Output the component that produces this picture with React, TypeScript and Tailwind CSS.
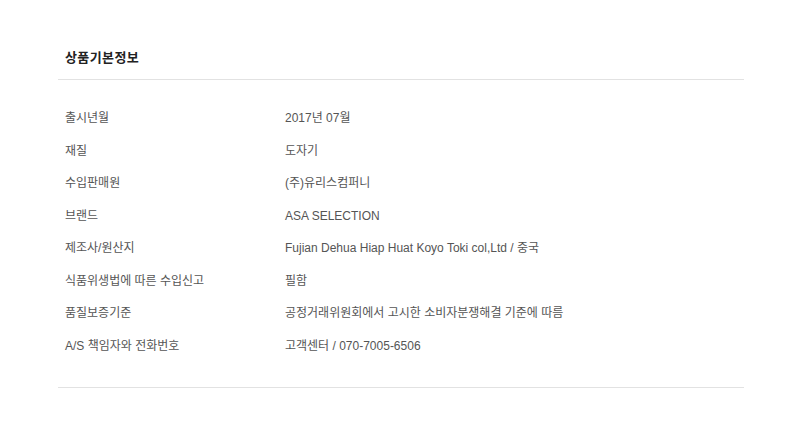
const rows: [string, string][] = [
  ["출시년월", "2017년 07월"],
  ["재질", "도자기"],
  ["수입판매원", "(주)유리스컴퍼니"],
  ["브랜드", "ASA SELECTION"],
  ["제조사/원산지", "Fujian Dehua Hiap Huat Koyo Toki col,Ltd / 중국"],
  ["식품위생법에 따른 수입신고", "필함"],
  ["품질보증기준", "공정거래위원회에서 고시한 소비자분쟁해결 기준에 따름"],
  ["A/S 책임자와 전화번호", "고객센터 / 070-7005-6506"],
];

export default function App() {
  return (
    <div
      className="w-[800px] h-[447px] bg-white"
      style={{ fontFamily: '"Liberation Sans", "Noto Sans CJK KR", sans-serif' }}
    >
      <div className="ml-[58px] w-[686px]">
        {/* Title */}
        <div className="h-[79px] pt-[49px] pl-[7px]">
          <h2 className="text-[13px] leading-[18px] font-bold text-[#222] tracking-[0.4px]">
            상품기본정보
          </h2>
        </div>
        <div className="h-px bg-[#e2e2e2]" />

        {/* Info rows */}
        <div className="pt-[22px] pb-[25px]">
          {rows.map(([label, value]) => (
            <div
              key={label}
              className="flex items-center h-[32.5px] pl-[7px] text-[12px] text-[#555]"
            >
              <div className="w-[220px] shrink-0">{label}</div>
              <div>{value}</div>
            </div>
          ))}
        </div>
        <div className="h-px bg-[#e2e2e2]" />
      </div>
    </div>
  );
}
